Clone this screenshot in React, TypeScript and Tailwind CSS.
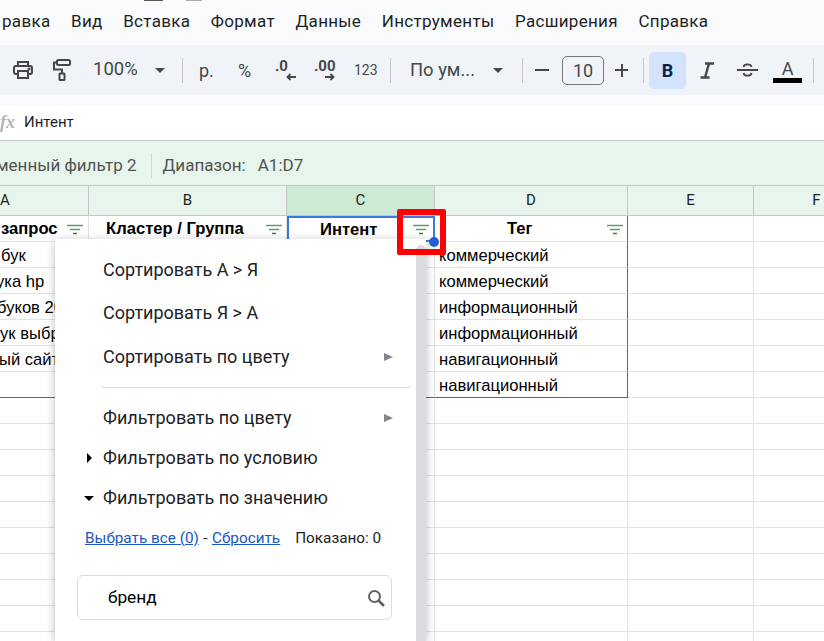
const menu = ["равка", "Вид", "Вставка", "Формат", "Данные", "Инструменты", "Расширения", "Справка"];

const rows = [
  ["бук", "коммерческий", "ml-[1px]"],
  ["ука hp", "коммерческий", "-ml-[4px]"],
  ["буков 20", "информационный", "-ml-[3px]"],
  ["ук выбр", "информационный", "ml-0"],
  ["ый сайт", "навигационный", "-ml-[1px]"],
  ["", "навигационный", "ml-0"],
];

function Sep() {
  return <div className="h-[25px] w-px shrink-0 bg-[#c7c7c7]" />;
}

function Caret() {
  return <div className="h-0 w-0 shrink-0 border-x-[5px] border-t-[5px] border-x-transparent border-t-[#444746]" />;
}

function FilterIcon() {
  return (
    <svg width="18" height="12" viewBox="0 0 18 12" className="shrink-0">
      <path d="M1 1.5h16" stroke="#5c9e6b" strokeWidth="1.5" />
      <path d="M4 5.5h10" stroke="#5c9e6b" strokeWidth="1.5" />
      <path d="M7 9.5h4" stroke="#2f8a45" strokeWidth="1.5" />
    </svg>
  );
}

function PrintIcon() {
  return (
    <svg width="20" height="18" viewBox="0 0 20 18" fill="none" stroke="#444746" strokeWidth="2">
      <path d="M5 5V1h10v4" />
      <rect x="1" y="5" width="18" height="8" rx="2" />
      <rect x="5" y="10" width="10" height="7" fill="#f0f4f9" />
      <circle cx="16" cy="8" r="0.6" />
    </svg>
  );
}

function RollerIcon() {
  return (
    <svg width="18" height="22" viewBox="0 0 18 22" fill="none" stroke="#444746" strokeWidth="2">
      <rect x="4" y="1" width="13" height="5" rx="1.5" />
      <path d="M4 3.5H1v7h8v4" />
      <rect x="6.5" y="14.5" width="5" height="6.5" rx="0.5" />
    </svg>
  );
}

function ArrowIcon({ flip }: { flip?: boolean }) {
  return (
    <svg width="10" height="8" viewBox="0 0 10 8" fill="none" stroke="#444746" strokeWidth="1.8" className={flip ? "rotate-180" : ""}>
      <path d="M0 4h8.5M5.5 1l3 3-3 3" />
    </svg>
  );
}

function Decimal({ label, textMl, arrowMl, flip }: { label: string; textMl: string; arrowMl: string; flip?: boolean }) {
  return (
    <div className="flex h-[24px] w-[40px] shrink-0 flex-col font-['Roboto',sans-serif] text-[15px] font-bold leading-[14px] text-[#444746]">
      <span className={`${textMl} mt-[1px]`}>{label}</span>
      <div className={arrowMl}><ArrowIcon flip={flip} /></div>
    </div>
  );
}

function ColHead({ label, w, active }: { label: string; w: string; active?: boolean }) {
  return (
    <div className={`${w} flex h-full shrink-0 items-center justify-center border-r border-[#c4c7c5] font-['Roboto',sans-serif] text-[15px] text-[#1f1f1f] ${active ? "bg-[#cdebd4]" : ""}`}>
      {label}
    </div>
  );
}

function HeaderCell({ label, w, pad, selected, end }: { label: string; w: string; pad: string; selected?: boolean; end?: boolean }) {
  return (
    <div className={`${w} ${pad} flex h-full shrink-0 items-center whitespace-nowrap pt-[2px] font-['Liberation_Sans',sans-serif] text-[16.6px] font-bold text-black ${selected ? "border-2 border-[#3b78e7]" : end ? "border-r border-b border-[#e1e3e1] border-r-[#38803f]" : "border-r border-b border-[#e1e3e1]"}`}>
      {label}
    </div>
  );
}

function Row({ a, d, shift, last }: { a: string; d: string; shift: string; last?: boolean }) {
  const line = last ? "border-b border-b-[#38803f]" : "border-b border-b-[#e1e3e1]";
  return (
    <div className="flex h-[26px] font-['Liberation_Sans',sans-serif] text-[16.6px] text-black">
      <div className={`flex w-[89px] shrink-0 items-center overflow-hidden whitespace-nowrap border-r border-r-[#e1e3e1] pt-[3px] ${line}`}>
        <span className={shift}>{a}</span>
      </div>
      <div className={`w-[198px] shrink-0 border-r border-r-[#e1e3e1] ${line}`} />
      <div className={`w-[148px] shrink-0 border-r border-r-[#e1e3e1] ${line}`} />
      <div className={`flex w-[193px] shrink-0 items-center border-r border-r-[#38803f] pl-[4px] pt-[3px] ${line}`}>{d}</div>
      <div className="w-[126px] shrink-0 border-r border-b border-[#e1e3e1]" />
      <div className="flex-1 border-b border-[#e1e3e1]" />
    </div>
  );
}

function EmptyRow() {
  return (
    <div className="flex h-[26px]">
      <div className="w-[89px] shrink-0 border-r border-b border-[#e1e3e1]" />
      <div className="w-[198px] shrink-0 border-r border-b border-[#e1e3e1]" />
      <div className="w-[148px] shrink-0 border-r border-b border-[#e1e3e1]" />
      <div className="w-[193px] shrink-0 border-r border-b border-[#e1e3e1]" />
      <div className="w-[126px] shrink-0 border-r border-b border-[#e1e3e1]" />
      <div className="flex-1 border-b border-[#e1e3e1]" />
    </div>
  );
}

function PopItem({ label, sub, mark, className }: { label: string; sub?: boolean; mark?: "r" | "d"; className: string }) {
  return (
    <div className={`relative flex items-center pl-[48px] pr-[33px] font-['Roboto',sans-serif] text-[18px] leading-[20px] text-[#202124] ${className}`}>
      {mark === "r" && <div className="absolute left-[32px] h-0 w-0 border-y-[5px] border-l-[5px] border-y-transparent border-l-black" />}
      {mark === "d" && <div className="absolute left-[29px] h-0 w-0 border-x-[5px] border-t-[5px] border-x-transparent border-t-black" />}
      <span className="flex-1">{label}</span>
      {sub && <div className="h-0 w-0 border-y-[4px] border-l-[9px] border-y-transparent border-l-[#80868b]" />}
    </div>
  );
}

export default function App() {
  return (
    <div className="relative h-[641px] w-[824px] overflow-hidden bg-white">
      {/* menu */}
      <div className="relative flex h-[45px] items-start bg-[#f9fbfd] pl-[2px] pt-[11px] font-['Roboto',sans-serif] text-[17px] leading-[20px] tracking-[0.3px] text-[#1f1f1f]">
        <div className="absolute left-[144px] top-0 h-[1px] w-[19px] bg-[#555]" />
        <div className="absolute left-[186px] top-0 h-[1px] w-[16px] bg-[#aaa]" />
        <div className="flex gap-[20.6px] whitespace-nowrap">
          {menu.map((m) => (
            <span key={m}>{m}</span>
          ))}
        </div>
      </div>

      {/* toolbar */}
      <div className="flex h-[50px] items-center whitespace-nowrap bg-[#f0f4f9] font-['Roboto',sans-serif] text-[#444746]">
        <div className="ml-[13px] shrink-0"><PrintIcon /></div>
        <div className="ml-[20px] shrink-0"><RollerIcon /></div>
        <span className="ml-[22px] w-[45px] shrink-0 text-[18.5px]">100%</span>
        <div className="ml-[17px]"><Caret /></div>
        <div className="ml-[17px]"><Sep /></div>
        <span className="ml-[16px] w-[14px] shrink-0 text-[18px]">р.</span>
        <span className="ml-[25px] w-[14px] shrink-0 text-[18px]">%</span>
        <div className="ml-[13px]"><Decimal label=".0" textMl="ml-[10px]" arrowMl="ml-[21px]" flip /></div>
        <Decimal label=".00" textMl="ml-[9px]" arrowMl="ml-[20px]" />
        <span className="ml-[9px] w-[23px] shrink-0 text-[14px]">123</span>
        <div className="ml-[13px]"><Sep /></div>
        <span className="ml-[19px] w-[62px] shrink-0 text-[18.4px]">По ум...</span>
        <div className="ml-[21px]"><Caret /></div>
        <div className="ml-[19px]"><Sep /></div>
        <div className="ml-[12px] h-[2px] w-[14px] shrink-0 bg-[#444746]" />
        <div className="ml-[13px] flex h-[29px] w-[42px] shrink-0 items-center justify-center rounded-[5px] border border-[#747775] text-[18px]">10</div>
        <div className="relative ml-[11px] h-[13px] w-[13px] shrink-0">
          <div className="absolute top-[5.5px] h-[2px] w-[13px] bg-[#444746]" />
          <div className="absolute left-[5.5px] h-[13px] w-[2px] bg-[#444746]" />
        </div>
        <div className="ml-[15px]"><Sep /></div>
        <div className="ml-[5px] flex h-[37px] w-[37px] shrink-0 items-center justify-center rounded-[5px] bg-[#d3e3fd] text-[18px] font-bold text-[#0b1f4f]">B</div>
        <div className="ml-[14px] shrink-0">
          <svg width="14" height="17" viewBox="0 0 14 17" fill="none" stroke="#444746" strokeWidth="2.4">
            <path d="M5 1.5h9M0.5 15.5h9M9 1.5L5 15.5" />
          </svg>
        </div>
        <div className="ml-[23px] shrink-0">
          <svg width="21" height="16" viewBox="0 0 21 16" fill="none" stroke="#444746" strokeWidth="1.8">
            <path d="M0 8h21M6.5 5C7 1.5 14 1.5 14.5 5M6.5 11C7 14.5 14 14.5 14.5 11" />
          </svg>
        </div>
        <div className="ml-[15px] flex w-[29px] shrink-0 flex-col items-center pt-[3px]">
          <span className="text-[18px] leading-[17px]">A</span>
          <div className="mt-[1px] h-[5px] w-[29px] bg-black" />
        </div>
        <div className="ml-[11px]"><Sep /></div>
      </div>

      {/* gap + formula bar */}
      <div className="h-[10px] bg-[#f9fbfd]" />
      <div className="flex h-[36px] items-center border-b border-[#c4c7c5] font-['Roboto',sans-serif] text-[15px] text-[#1f1f1f]">
        <span className="w-[24px] shrink-0 font-['Liberation_Serif',serif] text-[18px] font-bold italic text-[#b5b5b5]">fx</span>
        <span>Интент</span>
      </div>

      {/* filter bar */}
      <div className="flex h-[45px] items-center whitespace-nowrap border-b border-[#c4c7c5] bg-[#e8f5ec] pt-[5px] font-['Roboto',sans-serif] text-[17px] text-[#505352]">
        <span className="-ml-[4px]">менный фильтр 2</span>
        <div className="ml-[14px] h-[25px] w-px bg-[#cfd8d2]" />
        <span className="ml-[11px]">Диапазон:</span>
        <span className="ml-[12px]">A1:D7</span>
      </div>

      {/* column headers */}
      <div className="flex h-[30px] border-b border-[#c4c7c5] bg-[#e8f5ec]">
        <ColHead label="A" w="w-[89px] !justify-start" />
        <ColHead label="B" w="w-[198px]" />
        <ColHead label="C" w="w-[148px]" active />
        <ColHead label="D" w="w-[193px]" />
        <ColHead label="E" w="w-[126px]" />
        <ColHead label="F" w="w-[126px]" />
      </div>

      {/* sheet */}
      <div className="flex h-[26px]">
        <HeaderCell label="запрос" w="w-[89px]" pad="pl-[1px]" />
        <HeaderCell label="Кластер / Группа" w="w-[198px]" pad="pl-[17px]" />
        <HeaderCell label="Интент" w="w-[148px]" pad="pl-[31px]" selected />
        <HeaderCell label="Тег" w="w-[193px]" pad="pl-[72px]" end />
        <div className="w-[126px] shrink-0 border-r border-b border-[#e1e3e1]" />
        <div className="flex-1 border-b border-[#e1e3e1]" />
      </div>
      {rows.map((r, i) => (
        <Row key={i} a={r[0]} d={r[1]} shift={r[2]} last={i === rows.length - 1} />
      ))}
      {Array.from({ length: 10 }).map((_, i) => (
        <EmptyRow key={i} />
      ))}

      {/* filter icons in the header row */}
      <div className="absolute left-[66px] top-[224px]"><FilterIcon /></div>
      <div className="absolute left-[265px] top-[224px]"><FilterIcon /></div>
      <div className="absolute left-[412px] top-[224px]"><FilterIcon /></div>
      <div className="absolute left-[606px] top-[224px]"><FilterIcon /></div>

      {/* filter popup */}
      <div className="absolute left-[55px] top-[239px] h-[402px] w-[371px] bg-white shadow-[0_2px_9px_rgba(60,64,67,0.35)]">
        <div className="absolute right-0 top-[6px] h-[396px] w-[10px] rounded-t-full bg-[#dadce0]" />
        <PopItem label="Сортировать А > Я" className="mt-[21px]" />
        <PopItem label="Сортировать Я > А" className="mt-[23px]" />
        <PopItem label="Сортировать по цвету" sub className="mt-[24px]" />
        <div className="ml-[46px] mr-[15px] mt-[20px] h-px bg-[#dadce0]" />
        <PopItem label="Фильтровать по цвету" sub className="mt-[20px]" />
        <PopItem label="Фильтровать по условию" mark="r" className="mt-[20px]" />
        <PopItem label="Фильтровать по значению" mark="d" className="mt-[20px]" />
        <div className="ml-[30px] mt-[20px] flex font-['Roboto',sans-serif] text-[15.3px] leading-[20px] text-[#202124]">
          <span className="text-[#1a56c4] underline">Выбрать все (0)</span>
          <span className="mx-[4.5px]">-</span>
          <span className="text-[#1a56c4] underline">Сбросить</span>
          <span className="ml-[15px]">Показано: 0</span>
        </div>
        <div className="ml-[22px] mt-[27px] flex h-[45px] w-[315px] items-center rounded-[6px] border border-[#dadce0] pl-[30px] pr-[6px] font-['Roboto',sans-serif] text-[17.3px] text-black">
          <span className="flex-1">бренд</span>
          <svg width="18" height="18" viewBox="0 0 18 18" fill="none" stroke="#5f6368">
            <circle cx="7.5" cy="7.5" r="5.5" strokeWidth="2" />
            <path d="M11.5 11.5L17 17" strokeWidth="2.6" />
          </svg>
        </div>
      </div>

      {/* annotation */}
      <div className="absolute left-[397px] top-[209px] h-[46px] w-[49px] rounded-[2px] border-[6px] border-[#ff0000]" />
      <div className="absolute left-[429px] top-[237px] h-[10px] w-[10px] rounded-full bg-[#1f5fd6]" />
    </div>
  );
}
